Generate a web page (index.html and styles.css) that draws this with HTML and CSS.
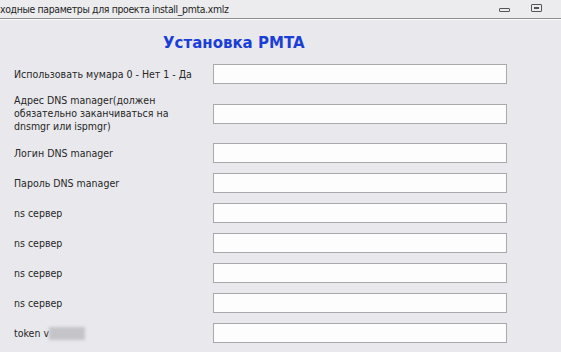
FILE: index.html
```html
<!DOCTYPE html>
<html lang="ru">

<head>
    <meta charset="UTF-8">
    <meta name="viewport" content="width=device-width, initial-scale=1.0">
    <title>Входные параметры для проекта install_pmta.xmlz</title>
    <link rel="stylesheet" href="styles.css">
</head>

<body>
    <div class="titlebar">
        <span class="titlebar-text">Входные параметры для проекта install_pmta.xmlz</span>
        <div class="titlebar-buttons">
            <span class="btn-min"></span>
            <span class="btn-max"></span>
        </div>
    </div>

    <h1 class="form-title">Установка PMTA</h1>

    <div class="form">
        <div class="row">
            <label class="label">Использовать мумара 0 - Нет 1 - Да</label>
            <input class="field" type="text">
        </div>
        <div class="row">
            <label class="label">Адрес DNS manager(должен<br>обязательно заканчиваться на<br>dnsmgr или ispmgr)</label>
            <input class="field" type="text">
        </div>
        <div class="row">
            <label class="label">Логин DNS manager</label>
            <input class="field" type="text">
        </div>
        <div class="row">
            <label class="label">Пароль DNS manager</label>
            <input class="field" type="text">
        </div>
        <div class="row">
            <label class="label">ns сервер</label>
            <input class="field" type="text">
        </div>
        <div class="row">
            <label class="label">ns сервер</label>
            <input class="field" type="text">
        </div>
        <div class="row">
            <label class="label">ns сервер</label>
            <input class="field" type="text">
        </div>
        <div class="row">
            <label class="label">ns сервер</label>
            <input class="field" type="text">
        </div>
        <div class="row">
            <label class="label">token v<span class="blurred"></span></label>
            <input class="field" type="text">
        </div>
    </div>
</body>

</html>
```

FILE: styles.css
```css
body {
    margin: 0;
    background: #e9e9ed;
    font-family: "DejaVu Sans Condensed", "DejaVu Sans", sans-serif;
    font-size: 10.5px;
    color: #262626;
    overflow: hidden;
}

/* window title bar */
.titlebar {
    height: 18px;
    display: flex;
    align-items: center;
    justify-content: space-between;
    background: #ececef;
    border-bottom: 1px solid #8e8e90;
    box-shadow: 0 1px 0 #fbfbfd;
}

.titlebar-text {
    margin-left: -6px;
    font-size: 10.4px;
    letter-spacing: -0.35px;
    color: #1e1e1e;
    white-space: nowrap;
}

.titlebar-buttons {
    display: flex;
    gap: 21px;
    margin-right: 19px;
    align-items: center;
}

.btn-min {
    width: 9px;
    height: 2px;
    border: 1px solid #555;
    border-radius: 1px;
    margin-top: 2px;
}

.btn-max {
    width: 9px;
    height: 6px;
    border: 1px solid #555;
    border-radius: 1px;
    position: relative;
    margin-top: -3px;
}

.btn-max::after {
    content: "";
    position: absolute;
    left: 2px;
    top: 2px;
    width: 5px;
    height: 2px;
    background: #555;
}

.form-title {
    margin: 14px 0 0 163px;
    font-family: "DejaVu Sans", sans-serif;
    font-size: 15px;
    line-height: 20px;
    font-weight: bold;
    color: #1b3fd6;
}

/* form rows */
.form {
    display: flex;
    flex-direction: column;
    gap: 10px;
    padding: 11px 0 0 14px;
}

.row {
    display: flex;
    align-items: center;
    min-height: 20px;
}

.label {
    width: 199px;
    line-height: 13px;
}

.field {
    box-sizing: border-box;
    width: 294px;
    height: 20px;
    margin: 0;
    padding: 0 3px;
    background: #fdfdfe;
    border: 1px solid #a9a9ad;
    border-radius: 0;
}

.blurred {
    display: inline-block;
    width: 36px;
    height: 13px;
    vertical-align: -3px;
    background: #c4c4c9;
    filter: blur(1.5px);
}
```
